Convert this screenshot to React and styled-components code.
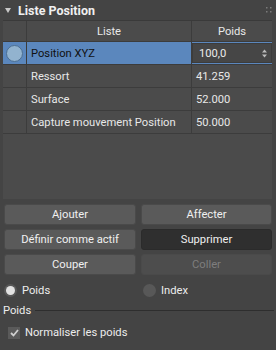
import React from 'react'
import styled, { createGlobalStyle } from 'styled-components'

const Global = createGlobalStyle`
  body {
    margin: 0;
    background: #444444;
    font-family: Roboto, 'Liberation Sans', Arial, sans-serif;
    font-size: 11.2px;
    color: #e6e6e6;
  }
`

const Panel = styled.div`
  width: 276px;
  height: 350px;
  background: #444444;
  box-sizing: border-box;
  overflow: hidden;
`

const TitleBar = styled.div`
  height: 20px;
  display: flex;
  align-items: center;
  padding: 0 4px 0 5px;
  gap: 7px;
`

const Title = styled.span`
  flex: 1;
  font-weight: bold;
  font-size: 12.5px;
  color: #f0f0f0;
`

const Table = styled.div`
  margin: 0 4px 0 3px;
  height: 178px;
  background: #4b4b4b;
  border-top: 1px solid #3a3a3a;
  display: flex;
  flex-direction: column;
`

const Row = styled.div`
  display: grid;
  grid-template-columns: 24px 165px 1fr;
  height: ${p => p.h || 22}px;
  border-bottom: 1px solid #3c3c3c;
  background: ${p => (p.selected ? '#5b87bd' : 'transparent')};
`

const Cell = styled.div`
  display: flex;
  align-items: center;
  justify-content: ${p => (p.center ? 'center' : 'flex-start')};
  padding-left: ${p => (p.center ? 0 : 4)}px;
  border-right: ${p => (p.last ? 'none' : '1px solid #3c3c3c')};
  color: ${p => (p.dark ? '#111' : '#e8e8e8')};
  white-space: nowrap;
`

const Dot = styled.div`
  width: 15px;
  height: 15px;
  border-radius: 50%;
  background: #92b3cf;
  border: 1px solid #4c6f92;
`

const Spin = styled.div`
  flex: 1;
  height: 20px;
  margin: 0 0 0 -2px;
  background: #464646;
  border: 1px solid #3c3c3c;
  box-sizing: border-box;
  display: flex;
  align-items: center;
  justify-content: space-between;
  padding: 0 4px 0 6px;
  color: #ececec;
`

const ButtonGrid = styled.div`
  display: grid;
  grid-template-columns: 132px 131px;
  column-gap: 5px;
  row-gap: 4px;
  padding: 5px 4px 0 4px;
`

const Button = styled.div`
  height: 21px;
  box-sizing: border-box;
  border-radius: 3px;
  border: 1px solid ${p => (p.dark ? '#2b2b2b' : '#4a4a4a')};
  background: ${p => (p.dark ? '#2f2f2f' : p.disabled ? '#4d4d4d' : '#5a5a5a')};
  color: ${p => (p.disabled ? '#7e7e7e' : '#f0f0f0')};
  display: flex;
  align-items: center;
  justify-content: center;
`

const RadioRow = styled.div`
  display: grid;
  grid-template-columns: 139px 1fr;
  padding: 4px 4px 0 4px;
  height: 22px;
  align-items: center;
`

const Radio = styled.label`
  display: flex;
  align-items: center;
  gap: 5px;
  color: #ececec;
`

const RadioCircle = styled.span`
  width: 13px;
  height: 13px;
  border-radius: 50%;
  background: #585858;
  box-sizing: border-box;
  display: flex;
  align-items: center;
  justify-content: center;
  &::after {
    content: '';
    display: ${p => (p.on ? 'block' : 'none')};
    width: 9px;
    height: 9px;
    border-radius: 50%;
    background: #e2e2e2;
  }
`

const Group = styled.div`
  display: flex;
  align-items: center;
  gap: 4px;
  padding: 0 2px 0 3px;
  height: 18px;
  color: #ececec;
  &::after {
    content: '';
    flex: 1;
    height: 1px;
    background: #2e2e2e;
  }
`

const Check = styled.label`
  display: flex;
  align-items: center;
  gap: 5px;
  padding: 7px 0 0 8px;
  color: #ececec;
`

const Box = styled.span`
  width: 12px;
  height: 12px;
  background: #5a5a5a;
  display: flex;
  align-items: center;
  justify-content: center;
`

const rows = [
  { name: 'Ressort', value: '41.259' },
  { name: 'Surface', value: '52.000' },
  { name: 'Capture mouvement Position', value: '50.000' },
]

export default function App() {
  return (
    <Panel>
      <Global />
      <TitleBar>
        <svg width="6" height="5" viewBox="0 0 6 5">
          <path d="M0 0 H6 L3 5 Z" fill="#c8c8c8" />
        </svg>
        <Title>Liste Position</Title>
        <svg width="6" height="6" viewBox="0 0 6 6" fill="#7a7a7a">
          <rect x="0" y="0" width="1.5" height="1.5" />
          <rect x="4" y="0" width="1.5" height="1.5" />
          <rect x="0" y="4" width="1.5" height="1.5" />
          <rect x="4" y="4" width="1.5" height="1.5" />
        </svg>
      </TitleBar>
      <Table>
        <Row h={20}>
          <Cell />
          <Cell center>Liste</Cell>
          <Cell center last>Poids</Cell>
        </Row>
        <Row selected h={22}>
          <Cell center>
            <Dot />
          </Cell>
          <Cell dark>Position XYZ</Cell>
          <Cell last style={{ paddingLeft: 2 }}>
            <Spin>
              <span>100,0</span>
              <svg width="5" height="9" viewBox="0 0 5 9" fill="#bdbdbd">
                <path d="M0 3.5 L2.5 0.5 L5 3.5 Z" />
                <path d="M0 5.5 L2.5 8.5 L5 5.5 Z" />
              </svg>
            </Spin>
          </Cell>
        </Row>
        {rows.map(r => (
          <Row key={r.name}>
            <Cell />
            <Cell>{r.name}</Cell>
            <Cell last>{r.value}</Cell>
          </Row>
        ))}
      </Table>
      <ButtonGrid>
        <Button>Ajouter</Button>
        <Button>Affecter</Button>
        <Button>Définir comme actif</Button>
        <Button dark>Supprimer</Button>
        <Button>Couper</Button>
        <Button disabled>Coller</Button>
      </ButtonGrid>
      <RadioRow>
        <Radio>
          <RadioCircle on />
          Poids
        </Radio>
        <Radio>
          <RadioCircle />
          Index
        </Radio>
      </RadioRow>
      <Group>Poids</Group>
      <Check>
        <Box>
          <svg width="9" height="8" viewBox="0 0 9 8">
            <path d="M1 4 L3.5 6.5 L8 1" stroke="#cfcfcf" strokeWidth="1.8" fill="none" />
          </svg>
        </Box>
        Normaliser les poids
      </Check>
    </Panel>
  )
}
